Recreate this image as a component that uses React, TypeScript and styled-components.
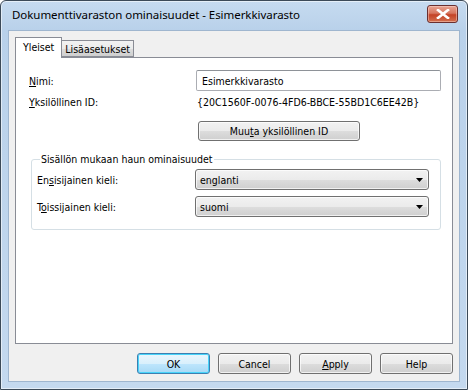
import React from 'react'
import styled, { createGlobalStyle } from 'styled-components'

const GlobalStyle = createGlobalStyle`
  html, body {
    margin: 0;
    padding: 0;
    background: #ffffff;
  }
  * {
    box-sizing: border-box;
  }
`

const uiFont = `Tahoma, "DejaVu Sans Condensed", "Liberation Sans", sans-serif`

const FIELDS = [
  { key: 'E', before: 'En', accel: 's', after: 'isijainen kieli:', value: 'englanti' },
  { key: 'T', before: 'T', accel: 'o', after: 'issijainen kieli:', value: 'suomi' },
]

const BUTTONS = [
  { label: 'OK', isDefault: true },
  { label: 'Cancel' },
  { label: 'Apply', accel: 'A' },
  { label: 'Help' },
]

const CloseGlyph = () => (
  <svg width="14" height="10" viewBox="0 0 14 10">
    <path
      d="M2 1 L12 9 M12 1 L2 9"
      stroke="#ffffff"
      strokeWidth="2.6"
      strokeLinecap="square"
    />
  </svg>
)

const Arrow = () => (
  <svg width="7" height="4" viewBox="0 0 7 4">
    <path d="M0 0 H7 L3.5 4 Z" fill="#000" />
  </svg>
)

export default function App() {
  return (
    <>
      <GlobalStyle />
      <Window>
        <TitleBar>
          <Title>Dokumenttivaraston ominaisuudet - Esimerkkivarasto</Title>
          <CloseButton>
            <CloseGlyph />
          </CloseButton>
        </TitleBar>

        <Client>
          <Tabs>
            <Tab $active>Yleiset</Tab>
            <Tab>Lisäasetukset</Tab>
          </Tabs>

          <Panel>
            <Row>
              <Label><Key>N</Key>imi:</Label>
              <TextInput>Esimerkkivarasto</TextInput>
            </Row>

            <IdRow>
              <Label><Key>Y</Key>ksilöllinen ID:</Label>
              <IdValue>{'{20C1560F-0076-4FD6-BBCE-55BD1C6EE42B}'}</IdValue>
            </IdRow>

            <ChangeIdButton>Muu<Key>t</Key>a yksilöllinen ID</ChangeIdButton>

            <Group>
              <Legend>Sisällön mukaan haun ominaisuudet</Legend>
              {FIELDS.map(f => (
                <ComboRow key={f.key}>
                  <ComboLabel>{f.before}<Key>{f.accel}</Key>{f.after}</ComboLabel>
                  <Combo>
                    <span>{f.value}</span>
                    <Arrow />
                  </Combo>
                </ComboRow>
              ))}
            </Group>
          </Panel>

          <ButtonRow>
            {BUTTONS.map(b => (
              <DialogButton key={b.label} $isDefault={b.isDefault}>
                {b.accel ? <><Key>{b.accel}</Key>{b.label.slice(1)}</> : b.label}
              </DialogButton>
            ))}
          </ButtonRow>
        </Client>
      </Window>
    </>
  )
}

const Window = styled.div`
  width: 468px;
  height: 390px;
  display: flex;
  flex-direction: column;
  border: 1px solid #3c4a58;
  border-radius: 6px 6px 0 0;
  background: linear-gradient(to bottom, #c6dbf0 0, #b9d1ea 29px, #c4d9ef 100%);
  box-shadow: inset 0 0 0 1px rgba(255, 255, 255, 0.55);
  padding: 0 7px 7px 7px;
`

const TitleBar = styled.div`
  height: 29px;
  display: flex;
  align-items: center;
  justify-content: space-between;
  padding: 0 2px 2px 4px;
`

const Title = styled.div`
  font-family: "Noto Sans", "Open Sans", sans-serif;
  font-size: 11.5px;
  color: #000;
  letter-spacing: -0.05px;
`

const CloseButton = styled.div`
  width: 31px;
  height: 18px;
  margin-top: -1px;
  display: flex;
  align-items: center;
  justify-content: center;
  border: 1px solid #6a2f2f;
  border-radius: 3px;
  background: linear-gradient(to bottom, #e8a493 0, #d7765f 45%, #c44226 55%, #d2704f 100%);
  box-shadow: inset 0 0 0 1px rgba(255, 220, 210, 0.45);
`

const Client = styled.div`
  flex: 1;
  display: flex;
  flex-direction: column;
  background: #f0f0f0;
  border: 1px solid #9fb6cf;
  padding: 6px 6px 7px 6px;
  font-family: ${uiFont};
  font-size: 10.5px;
  color: #000;
`

const Tabs = styled.div`
  display: flex;
  align-items: flex-end;
  height: 21px;
  position: relative;
  z-index: 1;
  margin-bottom: -1px;
`

const Tab = styled.div<{ $active?: boolean }>`
  height: ${p => (p.$active ? '21px' : '17px')};
  padding: 0 ${p => (p.$active ? '7px' : '3px')};
  display: flex;
  align-items: center;
  padding-bottom: ${p => (p.$active ? '2px' : '0')};
  border: 1px solid #898c95;
  border-bottom: ${p => (p.$active ? 'none' : '1px solid #898c95')};
  border-left: ${p => (p.$active ? '1px solid #898c95' : 'none')};
  background: ${p => (p.$active ? '#ffffff' : 'linear-gradient(to bottom, #f2f2f2 0, #ebebeb 50%, #dddddd 51%, #cfcfcf 100%)')};
  margin-bottom: ${p => (p.$active ? '0' : '1px')};
`

const Panel = styled.div`
  height: 287px;
  background: #ffffff;
  border: 1px solid #898c95;
  padding: 12px 11px 0 13px;
  display: flex;
  flex-direction: column;
`

const Row = styled.div`
  display: flex;
  align-items: center;
`

const IdRow = styled(Row)`
  margin-top: 4px;
  height: 14px;
`

const Label = styled.div`
  width: 167px;
  flex-shrink: 0;
`

const Key = styled.u`
  text-decoration: underline;
  text-underline-offset: 1px;
`

const TextInput = styled.div`
  flex: 1;
  height: 21px;
  border: 1px solid #abadb3;
  border-top-color: #8e9298;
  border-radius: 2px;
  padding: 0 5px;
  display: flex;
  align-items: center;
`

const IdValue = styled.div`
  padding-left: 1px;
`

const ButtonBase = styled.div`
  height: 21px;
  border: 1px solid #707070;
  border-radius: 3px;
  background: linear-gradient(to bottom, #f2f2f2 0, #ebebeb 50%, #dddddd 51%, #cfcfcf 100%);
  box-shadow: inset 0 0 0 1px rgba(255, 255, 255, 0.7);
  display: flex;
  align-items: center;
  justify-content: center;
`

const ChangeIdButton = styled(ButtonBase)`
  width: 162px;
  margin: 12px 0 0 169px;
  height: 20px;
`

const Group = styled.fieldset`
  margin: 12px 0 0 2px;
  padding: 4px 11px 12px 5px;
  border: 1px solid #d5dfe5;
  border-radius: 3px;
  display: flex;
  flex-direction: column;
  gap: 6px;
`

const Legend = styled.legend`
  padding: 0 1px;
  margin-left: 3px;
  font-size: 10.5px;
`

const ComboRow = styled.div`
  display: flex;
  align-items: center;
`

const ComboLabel = styled.div`
  width: 158px;
  flex-shrink: 0;
`

const Combo = styled(ButtonBase)`
  flex: 1;
  justify-content: space-between;
  padding: 0 5px 0 4px;
`

const ButtonRow = styled.div`
  margin-top: auto;
  display: flex;
  justify-content: flex-end;
  gap: 8px;
`

const DialogButton = styled(ButtonBase)<{ $isDefault?: boolean }>`
  width: 73px;
  ${p =>
    p.$isDefault &&
    `
    border-color: #3c7fb1;
    background: linear-gradient(to bottom, #eaf6fd 0, #d9f0fc 50%, #bee6fd 51%, #a7d9f5 100%);
    box-shadow: inset 0 0 0 1px #48d4fa;
  `}
`
